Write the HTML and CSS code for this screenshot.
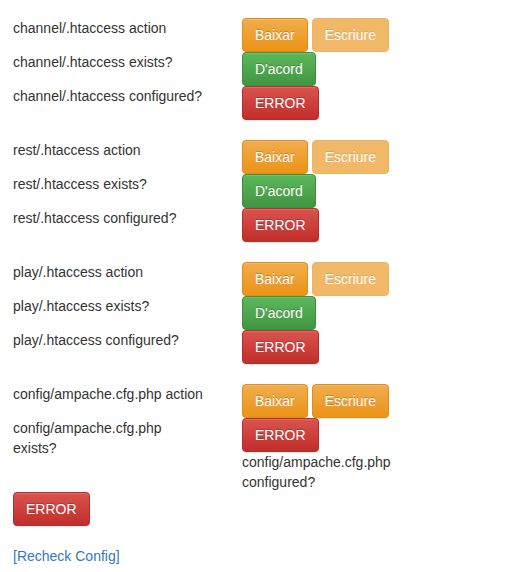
FILE: index.html
```html
<!DOCTYPE html>
<html>
<head>
<meta charset="utf-8">
<link rel="stylesheet" href="styles.css">
</head>
<body>
<div class="page">
  <div class="group">
    <div class="label">channel/.htaccess action</div>
    <div class="actions"><span class="btn btn-warning">Baixar</span><span class="btn btn-warning disabled">Escriure</span></div>
    <div class="label">channel/.htaccess exists?</div>
    <div class="actions"><span class="btn btn-success">D'acord</span></div>
    <div class="label">channel/.htaccess configured?</div>
    <div class="actions"><span class="btn btn-danger">ERROR</span></div>
  </div>
  <div class="group">
    <div class="label">rest/.htaccess action</div>
    <div class="actions"><span class="btn btn-warning">Baixar</span><span class="btn btn-warning disabled">Escriure</span></div>
    <div class="label">rest/.htaccess exists?</div>
    <div class="actions"><span class="btn btn-success">D'acord</span></div>
    <div class="label">rest/.htaccess configured?</div>
    <div class="actions"><span class="btn btn-danger">ERROR</span></div>
  </div>
  <div class="group">
    <div class="label">play/.htaccess action</div>
    <div class="actions"><span class="btn btn-warning">Baixar</span><span class="btn btn-warning disabled">Escriure</span></div>
    <div class="label">play/.htaccess exists?</div>
    <div class="actions"><span class="btn btn-success">D'acord</span></div>
    <div class="label">play/.htaccess configured?</div>
    <div class="actions"><span class="btn btn-danger">ERROR</span></div>
  </div>
  <div class="group last">
    <div class="label">config/ampache.cfg.php action</div>
    <div class="actions"><span class="btn btn-warning">Baixar</span><span class="btn btn-warning">Escriure</span></div>
    <div class="label">config/ampache.cfg.php exists?</div>
    <div class="actions"><span class="btn btn-danger">ERROR</span></div>
    <div class="label label-right">config/ampache.cfg.php configured?</div>
    <div class="actions actions-left"><span class="btn btn-danger">ERROR</span></div>
  </div>
  <a class="recheck" href="#">[Recheck Config]</a>
</div>
</body>
</html>
```
FILE: styles.css
```css
html, body {
  margin: 0;
  padding: 0;
  background: #fff;
}
body {
  font-family: "Liberation Sans", Arial, sans-serif;
  font-size: 14px;
  line-height: 20px;
  color: #333;
}
.page {
  padding: 18px 0 0 13px;
}
.group {
  display: grid;
  grid-template-columns: 229px auto;
  grid-auto-rows: auto;
  margin-bottom: 20px;
}
.label {
  grid-column: 1;
  width: 192px;
  height: 34px;
}
.label-right {
  grid-column: 2;
  height: 40px;
}
.actions {
  grid-column: 2;
  display: flex;
  gap: 4px;
  height: 34px;
}
.actions-left {
  grid-column: 1;
}
.btn {
  display: inline-block;
  box-sizing: border-box;
  height: 34px;
  padding: 6px 12px;
  border: 1px solid transparent;
  border-radius: 4px;
  font-size: 14px;
  line-height: 20px;
  color: #fff;
  text-align: center;
  white-space: nowrap;
  text-shadow: 0 -1px 0 rgba(0, 0, 0, 0.2);
  box-shadow: inset 0 1px 0 rgba(255, 255, 255, 0.15), 0 1px 1px rgba(0, 0, 0, 0.075);
}
.btn-warning {
  background-color: #f0ad4e;
  background-image: linear-gradient(to bottom, #f0ad4e 0, #eb9316 100%);
  border-color: #e38d13;
}
.btn-warning.disabled {
  background-color: #eb9316;
  background-image: none;
  opacity: 0.65;
  box-shadow: none;
}
.btn-success {
  background-color: #5cb85c;
  background-image: linear-gradient(to bottom, #5cb85c 0, #419641 100%);
  border-color: #3e8f3e;
}
.btn-danger {
  background-color: #d9534f;
  background-image: linear-gradient(to bottom, #d9534f 0, #c12e2a 100%);
  border-color: #b92c28;
}
.recheck {
  display: inline-block;
  margin-top: -1px;
  color: #337ab7;
  text-decoration: none;
}
```
